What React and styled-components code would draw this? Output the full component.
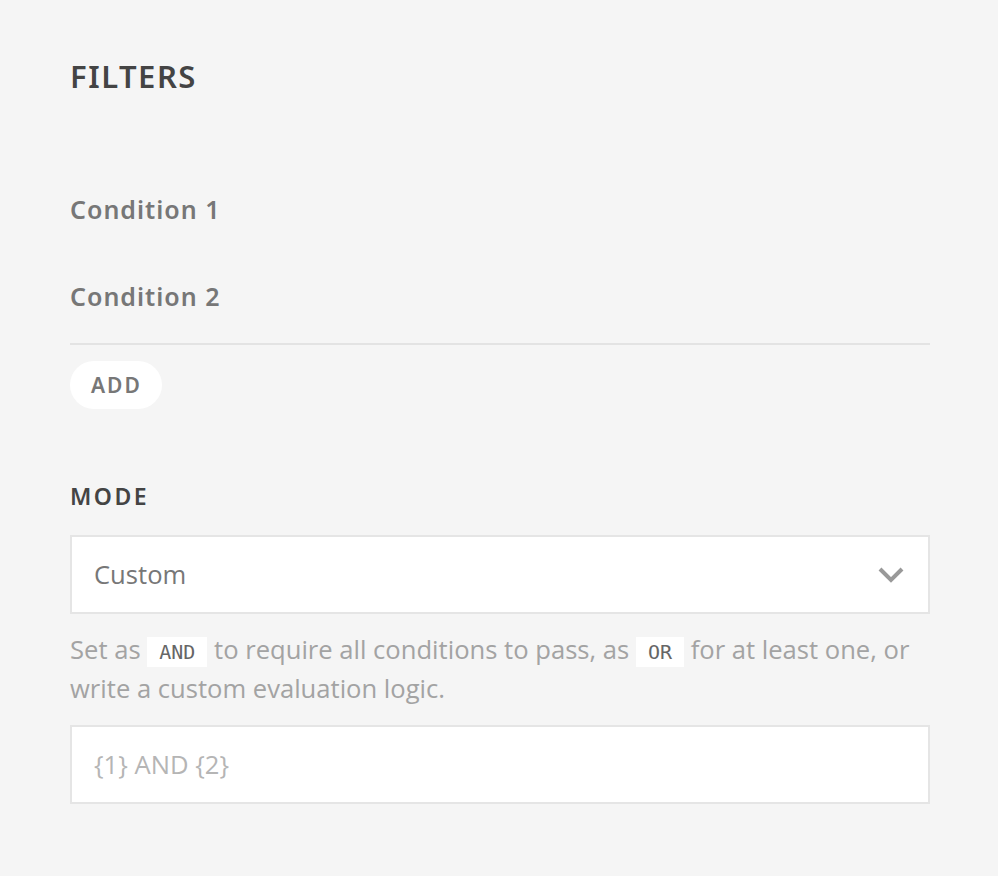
import React from 'react';
import styled, { createGlobalStyle } from 'styled-components';

const GlobalStyle = createGlobalStyle`
  html, body {
    margin: 0;
    padding: 0;
    background-color: #f5f5f5;
  }
`

const Panel = styled.div`
  width: 860px;
  padding: 57px 70px 60px 70px;
  font-family: "Open Sans", sans-serif;
`

const Title = styled.h2`
  font-family: "Noto Sans", sans-serif;
  font-size: 31px;
  font-weight: 600;
  color: #444;
  letter-spacing: 1.5px;
  margin: 0 0 97px 0;
  line-height: 38px;
`

const ConditionList = styled.div`
  display: flex;
  flex-direction: column;
  gap: 53px;
  padding-bottom: 30px;
  border-bottom: 2px solid #e3e3e3;
`

const ConditionLabel = styled.div`
  font-family: "Noto Sans", sans-serif;
  font-size: 25px;
  font-weight: 600;
  color: #777;
  letter-spacing: 1px;
  line-height: 34px;
`

const AddButton = styled.button`
  margin-top: 16px;
  height: 48px;
  padding: 0 20px 0 21px;
  border: none;
  border-radius: 24px;
  background-color: #fff;
  color: #777;
  font-family: "Noto Sans", sans-serif;
  font-size: 21px;
  font-weight: 600;
  letter-spacing: 2px;
  cursor: pointer;
`

const SectionLabel = styled.div`
  margin-top: 72px;
  margin-bottom: 24px;
  font-family: "Noto Sans", sans-serif;
  font-size: 23px;
  font-weight: 600;
  color: #444;
  letter-spacing: 2.5px;
  line-height: 30px;
`

const Field = styled.div`
  display: flex;
  align-items: center;
  justify-content: space-between;
  height: 75px;
  padding: 0 24px 0 22px;
  background-color: #fff;
  border: 2px solid #e5e5e5;
  font-size: 25.6px;
  color: ${p => (p.$placeholder ? '#b5b5b5' : '#777')};
`

const Help = styled.p`
  margin: 16px 0 17px 0;
  font-size: 25.6px;
  line-height: 39px;
  color: #a3a3a3;
`

const Code = styled.code`
  display: inline-block;
  font-family: "DejaVu Sans Mono", monospace;
  font-size: 20px;
  line-height: 30px;
  color: #666;
  background-color: #fff;
  padding: 0 12px;
`

const Chevron = () => (
  <svg width="26" height="16" viewBox="0 0 26 16">
    <path d="M2 2 L13 13 L24 2" fill="none" stroke="#999" strokeWidth="4" />
  </svg>
)

const App = () => {
  return (
    <>
      <GlobalStyle />
      <Panel>
        <Title>FILTERS</Title>
        <ConditionList>
          <ConditionLabel>Condition 1</ConditionLabel>
          <ConditionLabel>Condition 2</ConditionLabel>
        </ConditionList>
        <AddButton>ADD</AddButton>
        <SectionLabel>MODE</SectionLabel>
        <Field>
          <span>Custom</span>
          <Chevron />
        </Field>
        <Help>
          Set as <Code>AND</Code> to require all conditions to pass, as <Code>OR</Code> for at least one, or write a custom evaluation logic.
        </Help>
        <Field $placeholder>{'{1} AND {2}'}</Field>
      </Panel>
    </>
  )
}

export default App
